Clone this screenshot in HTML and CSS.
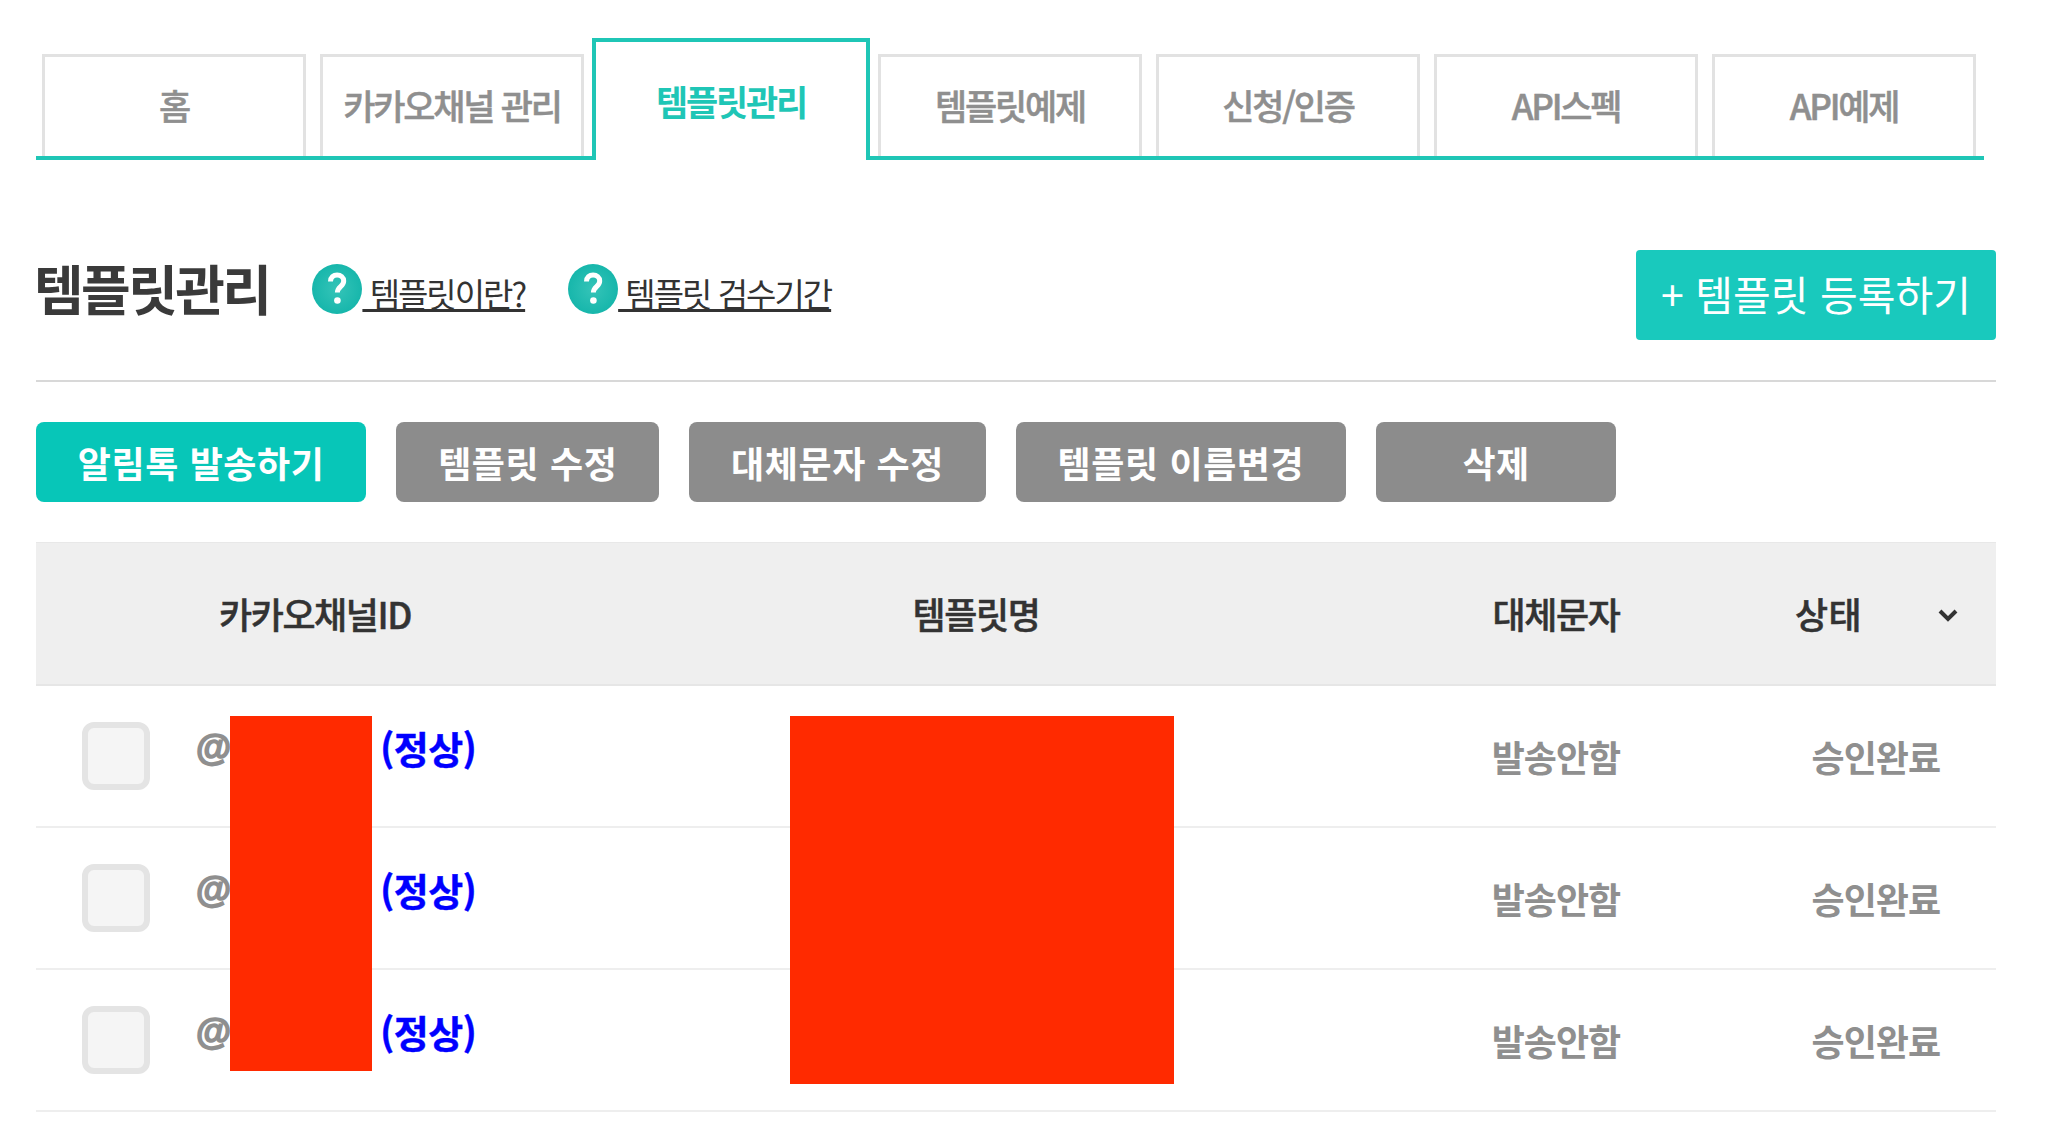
FILE: index.html
```html
<!DOCTYPE html>
<html lang="ko">
<head>
<meta charset="utf-8">
<title>템플릿관리</title>
<link rel="stylesheet" href="styles.css">
</head>
<body>
<main class="page">
  <nav class="tabs">
    <a class="tab">홈</a>
    <a class="tab">카카오채널 관리</a>
    <a class="tab tab-active">템플릿관리</a>
    <a class="tab">템플릿예제</a>
    <a class="tab">신청/인증</a>
    <a class="tab">API스펙</a>
    <a class="tab">API예제</a>
  </nav>

  <header class="head">
    <h1 class="title">템플릿관리</h1>
    <a class="help">
      <svg class="help-icon" viewBox="0 0 50 50"><defs><radialGradient id="g" cx="50%" cy="50%" r="55%"><stop offset="0" stop-color="#35c4b8"/><stop offset="1" stop-color="#14b5aa"/></radialGradient></defs><circle cx="25" cy="25" r="25" fill="url(#g)"/><path d="M18.5 17.5c0-4.2 3-6.5 6.6-6.5s6.6 2.3 6.6 6c0 5.6-6.3 5.8-6.3 11.5" fill="none" stroke="#fff" stroke-width="5"/><circle cx="25.4" cy="36.5" r="3.3" fill="#fff"/></svg>
      <span class="help-text">&nbsp;템플릿이란?</span>
    </a>
    <a class="help">
      <svg class="help-icon" viewBox="0 0 50 50"><circle cx="25" cy="25" r="25" fill="url(#g)"/><path d="M18.5 17.5c0-4.2 3-6.5 6.6-6.5s6.6 2.3 6.6 6c0 5.6-6.3 5.8-6.3 11.5" fill="none" stroke="#fff" stroke-width="5"/><circle cx="25.4" cy="36.5" r="3.3" fill="#fff"/></svg>
      <span class="help-text">&nbsp;템플릿 검수기간</span>
    </a>
    <button class="register">+ 템플릿 등록하기</button>
  </header>

  <div class="actions">
    <button class="action action-send">알림톡 발송하기</button>
    <button class="action">템플릿 수정</button>
    <button class="action">대체문자 수정</button>
    <button class="action">템플릿 이름변경</button>
    <button class="action action-del">삭제</button>
  </div>

  <div class="table-wrap">
    <table class="grid">
      <colgroup>
        <col class="c-check"><col class="c-channel"><col class="c-name"><col class="c-alt"><col class="c-state">
      </colgroup>
      <thead>
        <tr>
          <th></th>
          <th>카카오채널ID</th>
          <th>템플릿명</th>
          <th>대체문자</th>
          <th class="th-state">상태<svg class="chev" viewBox="0 0 20 13"><path d="M2 2l8 8 8-8" fill="none" stroke="#333" stroke-width="4"/></svg></th>
        </tr>
      </thead>
      <tbody>
        <tr>
          <td class="td-check"><input class="check" type="checkbox"></td>
          <td class="td-channel"><span class="at">@</span><span class="hidden-id"></span><span class="ok">(정상)</span></td>
          <td></td>
          <td class="td-alt">발송안함</td>
          <td class="td-state">승인완료</td>
        </tr>
        <tr>
          <td class="td-check"><input class="check" type="checkbox"></td>
          <td class="td-channel"><span class="at">@</span><span class="hidden-id"></span><span class="ok">(정상)</span></td>
          <td></td>
          <td class="td-alt">발송안함</td>
          <td class="td-state">승인완료</td>
        </tr>
        <tr>
          <td class="td-check"><input class="check" type="checkbox"></td>
          <td class="td-channel"><span class="at">@</span><span class="hidden-id"></span><span class="ok">(정상)</span></td>
          <td></td>
          <td class="td-alt">발송안함</td>
          <td class="td-state">승인완료</td>
        </tr>
      </tbody>
    </table>
    <div class="redact redact-id"></div>
    <div class="redact redact-name"></div>
  </div>
</main>
</body>
</html>
```

FILE: styles.css
```css
* { box-sizing: border-box; }
html, body { margin: 0; background: #fff; }
body { font-family: "Noto Sans CJK KR", "Noto Sans", sans-serif; color: #333; }
.page { box-sizing: content-box; width: 1960px; padding: 38px 0 0 36px; }

.tabs {
  display: flex; align-items: flex-end; width: 1948px; height: 122px;
  padding: 0 8px 0 6px; border-bottom: 4px solid #1fc6b6;
}
.tab {
  width: 264px; height: 102px; margin-right: 14px; padding-bottom: 4px;
  display: flex; align-items: center; justify-content: center;
  border: 3px solid #e2e2e2; border-bottom: 0;
  font-size: 35px; font-weight: 500; letter-spacing: -2.2px; color: #8f8f8f;
  -webkit-text-stroke: .5px #8f8f8f;
}
.tab:nth-child(2) { margin-right: 8px; }
.tab:last-child { margin-right: 0; }
.tab-active {
  width: 278px; height: 122px; margin: 0 8px 0 0; padding-bottom: 2px;
  border: 4px solid #1fc6b6; border-bottom: 0; background: #fff;
  position: relative; top: 4px; color: #1fc6b6; font-weight: 700; -webkit-text-stroke: 0;
}

.head {
  display: flex; align-items: center; height: 222px; padding-top: 50px;
  border-bottom: 2px solid #d8d8d8;
}
.title { margin: 0 43px 0 -2px; padding-bottom: 14px; font-size: 54px; font-weight: 700; letter-spacing: -2.6px; color: #3a3a3a; line-height: 1; }
.help { display: flex; align-items: center; margin-right: 43px; }
.help-icon { width: 50px; height: 50px; flex: none; margin-bottom: 12px; }
.help-text { font-size: 33px; font-weight: 400; letter-spacing: -2px; color: #333; text-decoration: underline; line-height: 1; margin-bottom: 4px; }
.register {
  margin-left: auto; width: 360px; height: 90px; padding: 0 0 4px;
  border: 0; border-radius: 4px; background: #19c9bd; color: #fff;
  font-family: inherit; font-size: 41px; font-weight: 400; letter-spacing: 0;
}

.actions { display: flex; gap: 30px; padding-top: 40px; }
.action {
  height: 80px; padding: 0 41.8px; min-width: 240px;
  border: 0; border-radius: 8px; background: #8c8c8c; color: #fff;
  font-family: inherit; font-size: 36px; font-weight: 700; letter-spacing: .6px;
}
.action-send { background: #07c6b8; }

.table-wrap { position: relative; margin-top: 40px; }
.grid { width: 100%; table-layout: fixed; border-collapse: collapse; }
.c-check { width: 124px; }
.c-channel { width: 310px; }
.c-name { width: 1012px; }
.c-alt { width: 148px; }
.c-state { width: 366px; }
.grid th {
  height: 142px; padding: 0; background: #efefef;
  border-top: 1px solid #e8e8e8; border-bottom: 2px solid #e6e6e6;
  font-size: 36px; font-weight: 500; letter-spacing: -1.4px; color: #333; text-align: center;
  -webkit-text-stroke: .5px #333;
}
.grid .th-state { text-align: left; padding-left: 165px; letter-spacing: .5px; }
.chev { width: 20px; height: 13px; margin-left: 76px; vertical-align: 7px; }
.grid td { height: 142px; padding: 0; border-bottom: 2px solid #eee; font-size: 36px; color: #8f8f8f; font-weight: 700; letter-spacing: -1px; }
.td-check { padding-left: 46px !important; }
.check {
  appearance: none; display: block; margin: 0; width: 68px; height: 68px;
  border: 6px solid #e4e4e4; border-radius: 12px; background: #f5f5f5;
}
.td-channel { padding: 0 0 20px 36px !important; white-space: nowrap; }
.at { font-family: "Liberation Sans", sans-serif; font-weight: 700; font-size: 36px; letter-spacing: 0; -webkit-text-stroke: 1.6px #8f8f8f; vertical-align: 2px; }
.hidden-id { display: inline-block; width: 149px; }
.ok { color: #00f; font-size: 38px; letter-spacing: -.6px; position: relative; top: 2px; -webkit-text-stroke: .4px #00f; }
.td-alt { text-align: center; }
.td-state { text-align: right; padding-right: 56px !important; }

.redact { position: absolute; top: 174px; background: #ff2a00; }
.redact-id { left: 194px; width: 142px; height: 355px; }
.redact-name { left: 754px; width: 384px; height: 368px; }
```
